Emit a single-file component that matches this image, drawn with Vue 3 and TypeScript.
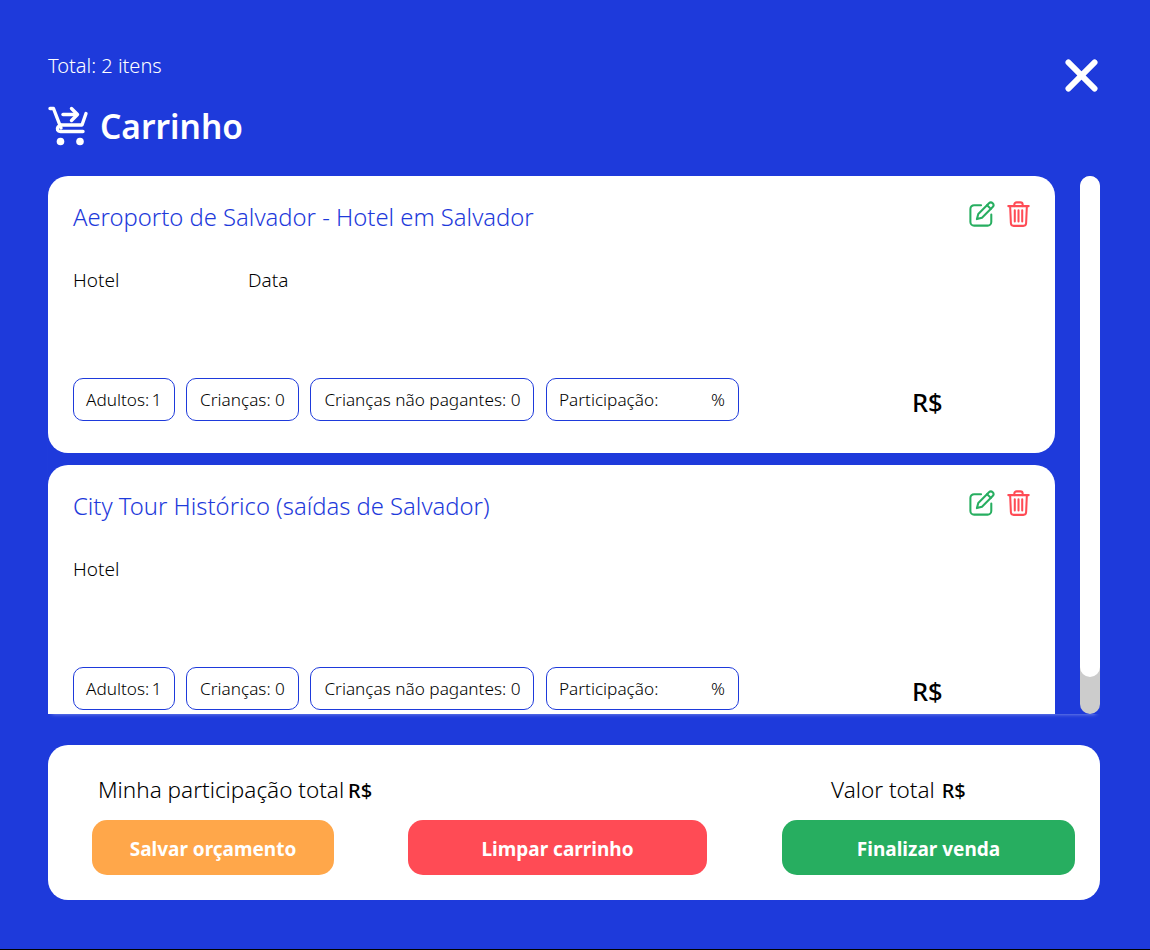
<script setup lang="ts">
interface CartItem {
  title: string
  showDate: boolean
}

const items: CartItem[] = [
  { title: 'Aeroporto de Salvador - Hotel em Salvador', showDate: true },
  { title: 'City Tour Histórico (saídas de Salvador)', showDate: false }
]
</script>

<template>
  <div class="cart">
    <div class="cart-head">
      <div>
        <p class="cart-total">Total: 2 itens</p>
        <h1 class="cart-title">
          <svg class="cart-icon" viewBox="0 0 42 42" fill="none" stroke="#fff" stroke-width="3.400" stroke-linecap="round" stroke-linejoin="round">
            <path d="M3 3.500h3.500l7.500 19.500" />
            <path d="M39 8.500l-4 11.500H15" />
            <path d="M36 26.500H13.500c-3 0-4-2.500-2.500-4.500l3-2" />
            <path d="M16 9.500h13" />
            <path d="M24.500 3.500l6 6-6 6" />
            <circle cx="13.500" cy="36.500" r="3.800" fill="#fff" stroke="none" />
            <circle cx="33" cy="36.500" r="3.800" fill="#fff" stroke="none" />
          </svg>
          Carrinho
        </h1>
      </div>
      <button class="close-btn" type="button" aria-label="Fechar">
        <svg viewBox="0 0 34 34" fill="none" stroke="#fff" stroke-width="6" stroke-linecap="round">
          <path d="M3.500 3.500l27 27M30.500 3.500l-27 27" />
        </svg>
      </button>
    </div>

    <div class="cart-scroll">
      <div class="cart-list">
        <article v-for="item in items" :key="item.title" class="card">
          <div class="card-top">
            <h2 class="card-title">{{ item.title }}</h2>
            <div class="card-actions">
              <svg class="act act-edit" viewBox="0 0 28 28" fill="none" stroke="#27ae60" stroke-width="2.200" stroke-linecap="round" stroke-linejoin="round">
                <path d="M13 4.500H5.500a4 4 0 0 0 -4 4v14a4 4 0 0 0 4 4h14.500a4 4 0 0 0 4 -4v-8" />
                <path d="M8.500 19.500l1.500 -5.500L21.500 2.500a2.500 2.500 0 0 1 4 4L14 18z" />
                <path d="M19.500 4.500l4 4" />
              </svg>
              <svg class="act act-trash" viewBox="0 0 24 28" fill="none" stroke="#ff4b55" stroke-width="2.200" stroke-linecap="round" stroke-linejoin="round">
                <path d="M1 5.500h22" />
                <path d="M7.500 5.500V4a2.500 2.500 0 0 1 2.500 -2.500h4A2.500 2.500 0 0 1 16.500 4v1.500" />
                <path d="M3 5.500l.8 18.500a3 3 0 0 0 3 2.800h10.400a3 3 0 0 0 3 -2.800L21 5.500" />
                <path d="M8 10v12M12 10v12M16 10v12" />
              </svg>
            </div>
          </div>
          <div class="card-info">
            <span class="info-hotel">Hotel</span>
            <span v-if="item.showDate">Data</span>
          </div>
          <div class="card-bottom">
            <div class="chips">
              <span class="chip chip-adults">Adultos: 1</span>
              <span class="chip">Crianças: 0</span>
              <span class="chip">Crianças não pagantes: 0</span>
              <span class="chip chip-part"><span>Participação:</span><span>%</span></span>
            </div>
            <strong class="price">R$</strong>
          </div>
        </article>
      </div>
      <div class="scroll-track"><div class="scroll-thumb"></div></div>
    </div>

    <div class="summary">
      <div class="summary-row">
        <p class="sum-mine">Minha participação total <b>R$</b></p>
        <p class="sum-total">Valor total <b>R$</b></p>
      </div>
      <div class="summary-btns">
        <button class="btn btn-save" type="button">Salvar orçamento</button>
        <button class="btn btn-clear" type="button">Limpar carrinho</button>
        <button class="btn btn-finish" type="button">Finalizar venda</button>
      </div>
    </div>
  </div>
</template>

<style scoped>
.cart {
  box-sizing: border-box;
  height: 950px;
  padding: 52px 50px 0 48px;
  background: #1e3adb;
  border-bottom: 1px solid #000;
  font-family: "Noto Sans", "Open Sans", sans-serif;
  font-weight: 300;
  color: #000;
}

.cart-head {
  display: flex;
  justify-content: space-between;
  align-items: flex-start;
  height: 124px;
}

.cart-total {
  margin: 1px 0 0;
  font-size: 20px;
  line-height: 26px;
  color: #fff;
}

.cart-title {
  display: flex;
  align-items: center;
  gap: 11px;
  margin: 24px 0 0 -1px;
  font-size: 33.500px;
  line-height: 46px;
  font-weight: 600;
  color: #fff;
}

.cart-icon {
  width: 42px;
  height: 42px;
}

.close-btn {
  width: 33px;
  height: 33px;
  margin: 7px 2px 0 0;
  padding: 0;
  border: 0;
  background: none;
}

.close-btn svg {
  display: block;
  width: 33px;
  height: 33px;
}

.cart-scroll {
  display: flex;
  justify-content: space-between;
  height: 538px;
  box-shadow: 0 4px 4px -4px rgba(255, 255, 255, 0.5);
}

.cart-list {
  width: 1007px;
  overflow: hidden;
}

.scroll-track {
  width: 20px;
  background: #ccc;
  border-radius: 10px;
}

.scroll-thumb {
  height: 501px;
  background: #fff;
  border-radius: 10px;
}

.card {
  box-sizing: border-box;
  display: flex;
  flex-direction: column;
  height: 277px;
  margin-bottom: 12px;
  padding: 24px 25px 32px;
  background: #fff;
  border-radius: 20px;
}

.card-top {
  display: flex;
  justify-content: space-between;
  align-items: flex-start;
}

.card-title {
  margin: 0;
  font-size: 23.800px;
  line-height: 34px;
  font-weight: 300;
  color: #1e3adb;
}

.card-actions {
  display: flex;
  gap: 12px;
  margin-top: 1px;
}

.act {
  height: 26px;
}

.act-edit {
  width: 26px;
}

.act-trash {
  width: 23px;
}

.card-info {
  display: flex;
  margin-top: 34px;
  font-size: 19px;
  line-height: 24px;
}

.info-hotel {
  width: 175px;
}

.card-bottom {
  display: flex;
  align-items: center;
  margin-top: auto;
}

.chips {
  display: flex;
  gap: 11.500px;
}

.chip {
  box-sizing: border-box;
  display: flex;
  align-items: center;
  height: 43px;
  padding: 0 13px 1px;
  border: 1px solid #1e3adb;
  border-radius: 10px;
  font-size: 17.200px;
  white-space: nowrap;
}

.chip-adults {
  padding: 0 12px 1px;
  word-spacing: -2px;
}

.chip-part {
  justify-content: space-between;
  width: 193px;
  padding-left: 12px;
}

.price {
  margin: 5px 0 0 173px;
  font-size: 25.500px;
  font-weight: 500;
}

.summary {
  box-sizing: border-box;
  height: 155px;
  margin-top: 31px;
  padding: 30px 25px 0 44px;
  background: #fff;
  border-radius: 20px;
}

.summary-row {
  display: flex;
  font-size: 22.500px;
  line-height: 30px;
}

.summary-row p {
  margin: 0;
}

.summary-row b {
  font-size: 20px;
  font-weight: 500;
}

.sum-mine {
  width: 733px;
  padding-left: 6px;
}

.sum-mine b {
  margin-left: -2px;
}

.sum-total b {
  margin-left: 1px;
}

.summary-btns {
  display: flex;
  margin-top: 14px;
}

.btn {
  height: 55px;
  padding: 2px 0 0;
  border: 0;
  border-radius: 15px;
  font-family: inherit;
  font-size: 19px;
  font-weight: 700;
  color: #fff;
}

.btn-save {
  width: 242px;
  background: #ffa74a;
}

.btn-clear {
  width: 299px;
  margin-left: 74px;
  background: #ff4b55;
}

.btn-finish {
  width: 293px;
  margin-left: auto;
  background: #27ae60;
}
</style>
